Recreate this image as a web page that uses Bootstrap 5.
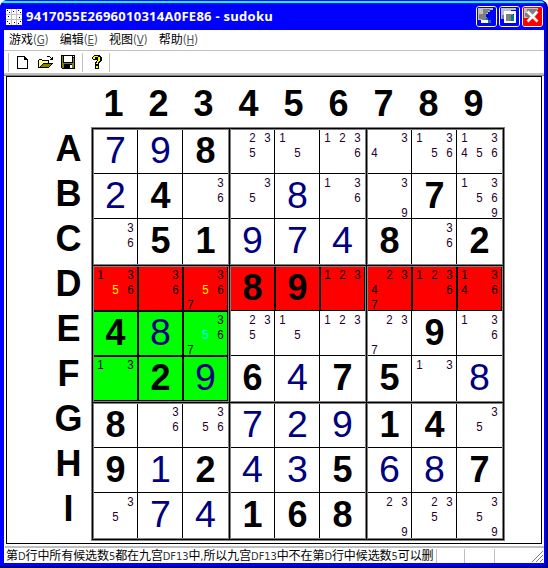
<!DOCTYPE html>
<html lang="zh-CN">
<head>
<meta charset="utf-8">
<title>sudoku</title>
<link href="https://cdn.jsdelivr.net/npm/bootstrap@5.3.0/dist/css/bootstrap.min.css" rel="stylesheet">
<style>
body{width:548px;height:568px;overflow:hidden;background:#fff;font-family:"Liberation Sans","Noto Sans CJK SC",sans-serif;color:#000}
svg{display:block;flex:none}
.win{width:548px;height:568px;background:#00f;border-radius:8px 8px 0 0;border-right:2px solid #000080;border-bottom:2px solid #000080;padding:0 2px 3px 4px}
.titlebar{height:30px;margin:0 -2px 0 -4px;padding:5px 3px 0 6px;background:linear-gradient(#00f 0 1px,#0ff 1px 3px,#00f 3px);border-radius:8px 8px 0 0}
.title-text{font:bold 13px/22px "Open Sans",sans-serif;margin-left:4px;letter-spacing:.27px;white-space:pre}
.cap{width:21px;height:21px;border:1px solid #fff;border-radius:3px;margin:1px 0 0 2px;overflow:hidden}
.client{height:533px}
.menus{height:21px;border-bottom:1px solid silver;padding:0 0 2px 5px;font:12px/17px "Noto Sans CJK SC",sans-serif;gap:11.5px}
.menus span{font-family:"DejaVu Sans",sans-serif;font-stretch:condensed;font-size:11.5px;color:#555;letter-spacing:-.3px}
.menus i{font-style:normal;text-decoration:underline}
.tools{height:22px}
.vbar{width:1px;height:19px;background:silver}
.edge{height:3px;background:linear-gradient(silver 0 2px,gray 2px)}
.edge-low{height:2px;background:silver;margin:2px 0 0 1px}
.sheet{width:536px;height:468px;margin-left:2px;border:1px solid #000;padding:4px 0 0 39px}
.axis{font-weight:700;font-size:36px;line-height:45px;text-align:center}
.axis>div{width:45px;height:45px}
.board{width:414px;height:414px;margin-top:1px;background:#000;border:1px solid gray;padding:2px;display:grid;grid-template:repeat(3,134px)/repeat(3,134px);gap:3px}
.block{display:grid;grid-template:44px 45px 45px/44px 45px 45px;box-shadow:0 0 0 1px gray;background:#fff}
.cell{display:flex;align-items:flex-end;justify-content:flex-end;border:0 solid #000;position:relative}
.c0,.c1{border-right-width:1px}.r0,.r1{border-bottom-width:1px}
.big{flex:none;width:45px;font-size:36px;line-height:47px;height:47px;text-align:center;font-weight:700}
.c0 .big,.c1 .big{margin-right:-1px}.r0 .big,.r1 .big{margin-bottom:-1px}
.big.solved{font-weight:400;font-size:37.5px;color:#000080}
.cands{flex:none;display:grid;grid-template:repeat(3,15px)/repeat(3,15px);font-size:12.5px;line-height:15px;text-align:center;margin-bottom:-2px;color:#28002c}
.c0 .cands,.c1 .cands{margin-right:-1px}.r0 .cands,.r1 .cands{margin-bottom:-3px}
.cands span{transform:scaleX(.92)}
.red{background:#f00}.green{background:#0f0}
.red .cands,.green .cands{color:#000}
.red.c1,.red.c2,.green.c1,.green.c2{background-image:linear-gradient(90deg,#000 1px,transparent 1px)}
.red.c2:after,.green.c2:after{content:"";position:absolute;inset:0 0 0 auto;width:1px;background:#000}
.green.r1,.green.r2{border-top:1px solid #000}
.green.r2{border-bottom:1px solid #000}
.green.r2>*{margin-bottom:-1px}
.green.r2 .cands{margin-bottom:-3px}
.red .hot{color:#ff0}.green .hot{color:#0ff}
.status{height:17px;font:12px/14px "Noto Sans CJK SC",sans-serif;margin-left:1px}
.status .msg{width:431px;height:15px;white-space:nowrap;padding-left:1px;letter-spacing:-.08px}
.status b{font:11px/14px "DejaVu Sans",sans-serif;font-stretch:condensed;color:#333}
.status .pane{border-left:1px solid silver;height:14px;margin-top:1px}
.p1{width:28px}.p2{width:30px}
.i-new{margin-left:8px}.i-open{margin-left:10px}.i-save{margin-left:7px}.i-help{margin-left:9px}.gap7{margin-left:7px}
</style>
<script src="https://cdn.jsdelivr.net/npm/bootstrap@5.3.0/dist/js/bootstrap.bundle.min.js"></script>
</head>
<body>
<div class="win d-flex flex-column">
  <div class="titlebar d-flex align-items-start">
    <svg width="16" height="16" class="mt-1" shape-rendering="crispEdges"><path fill="#fff" d="M0 0h16v16H0z"/><path fill="silver" d="M5 0h1v16H5zM10 0h1v16h-1zM0 5h16v1H0zM0 10h16v1H0z"/><path fill="#000" d="M1 1h1v1H1zM3 3h1v1H3zM7 2h1v1H7zM12 1h1v1h-1zM14 3h1v1h-1zM2 7h1v1H2zM13 8h1v1h-1zM1 12h1v1H1zM3 14h1v1H3zM8 13h1v1H8zM12 14h1v1h-1zM14 12h1v1h-1z"/></svg>
    <div class="title-text text-white flex-grow-1">9417055E2696010314A0FE86 - sudoku</div>
    <div class="cap"><svg width="19" height="19" shape-rendering="crispEdges"><path fill="#00f" d="M0 0h19v19H0z"/><path fill="silver" d="M1 1h15v2h-3v2h-2v2H9v3H5v3H1z"/><path fill="gray" d="M6 2h7v2h-2v2H9v4h1v4H5v-2H2V7h4z"/><path fill="teal" d="M9 11h2v2h3v3h-3v-2H9z"/><path fill="#fff" d="M4 13h7v3H4z"/></svg></div>
    <div class="cap"><svg width="19" height="19" shape-rendering="crispEdges"><path fill="#00f" d="M0 0h19v19H0z"/><path fill="silver" d="M1 1h15v2h-5v4H6v5H1z"/><path fill="gray" d="M5 5h9l-3 9H5v-2H2V8h3z"/><path fill="teal" d="M11 8h3v7h-3z"/><path fill="#fff" d="M4 4h12v12H4zM6 7v7h8V7z" fill-rule="evenodd"/></svg></div>
    <div class="cap"><svg width="19" height="19"><path fill="red" d="M0 0h19v19H0z"/><path fill="silver" d="M1 1h14v2h-4v4H6v4H1z"/><path fill="gray" d="M4 2h10v5l-3 5H7L2 9V6h2z"/><path stroke="#fff" stroke-width="2.6" d="M4.500 4.500l10 10M14.500 4.500l-10 10"/></svg></div>
  </div>
  <div class="client bg-white">
    <div class="menus d-flex">
      <div>游戏<span>(<i>G</i>)</span></div><div>编辑<span>(<i>E</i>)</span></div><div>视图<span>(<i>V</i>)</span></div><div>帮助<span>(<i>H</i>)</span></div>
    </div>
    <div class="tools d-flex align-items-center">
      <div class="vbar ms-1"></div>
      <svg class="i-new" width="11" height="13" shape-rendering="crispEdges"><path fill="#000" d="M0 0h8v1h1v1h1v1h1v10H0zM1 1v11h9V4H7V1z" fill-rule="evenodd"/></svg>
      <svg class="i-open" width="16" height="14" shape-rendering="crispEdges"><path fill="#000" d="M9 1h3v1h1v1h1V2h1v3h-3V4h1V3h-1V2H9zM1 4h3v1h7v3h4v1h-1v1h-1v1h-1v1h-1v1H0V5h1z"/><path fill="#ffff80" d="M1 5h3v1h6v2H5v1H4v1H3v1H2v1H1z"/><path fill="olive" d="M5 9h8v1h-1v1h-1v1H3v-1h1v-1h1z"/></svg>
      <svg class="i-save" width="14" height="14" shape-rendering="crispEdges"><path fill="#000" d="M0 0h14v14H1v-1H0z"/><path fill="olive" d="M1 1h1v7h10V3h1v10H1z"/><path fill="#fff" d="M3 1h8v6H3zM12 1h1v1h-1zM9 10h2v3H9z"/><path fill="#000" d="M3 9h8v1H3zM3 10h6v3H3z"/></svg>
      <div class="vbar gap7"></div>
      <svg class="i-help" width="10" height="14" shape-rendering="crispEdges"><path fill="#000" d="M2 0h6v1h1v1h1v4H9v1H8v1H7v2H3V7h1V6h1V5H1V4H0V2h1V1h1zM3 10h4v4H3z"/><path fill="#ff0" d="M3 1h3v1H3v2H1V2h1V1zM6 2h2v4H7v1H6v2H4V8h1V6h1zM4 11h2v2H4z"/></svg>
      <div class="vbar gap7"></div>
    </div>
    <div class="edge"></div>
    <div class="sheet">
      <div class="axis d-flex" id="cols"></div>
      <div class="d-flex">
        <div class="axis d-flex flex-column" id="rows"></div>
        <div class="board" id="board"></div>
      </div>
    </div>
    <div class="edge-low"></div>
    <div class="status d-flex">
      <div class="msg">第<b>D</b>行中所有候选数<b>5</b>都在九宫<b>DF13</b>中<b>,</b>所以九宫<b>DF13</b>中不在第<b>D</b>行中候选数<b>5</b>可以删</div>
      <div class="pane p1"></div><div class="pane p2"></div><div class="pane flex-grow-1 d-flex justify-content-end align-items-end"><svg width="13" height="13"><path stroke="gray" d="M1 12L12 1M5 12l7-7M9 12l3-3"/></svg></div>
    </div>
  </div>
</div>
<script>
// "=n" given digit, "+n" solved digit, otherwise the list of candidates
const rowData = [
 '+7 +9 =8 235 15 1236 34 1356 13456',
 '+2 =4 36 35 +8 136 39 =7 13569',
 '36 =5 =1 +9 +7 +4 =8 36 =2',
 '1356 36 3567 =8 =9 123 2347 1236 1346',
 '=4 +8 3567 235 15 123 237 =9 136',
 '13 =2 +9 =6 +4 =7 =5 13 +8',
 '=8 36 356 +7 +2 +9 =1 =4 35',
 '=9 +1 =2 +4 +3 =5 +6 +8 =7',
 '35 +7 +4 =1 =6 =8 239 235 359'].map(r => r.split(' '));
const cell = (r, c) => {
  const v = rowData[r][c], hue = r === 3 ? ' red' : (r === 4 || r === 5) && c < 3 ? ' green' : '';
  const body = /[=+]/.test(v[0])
    ? `<div class="big${v[0] === '+' ? ' solved' : ''}">${v[1]}</div>`
    : '<div class="cands">' + [...'123456789'].map(n => `<span${n === '5' ? ' class="hot"' : ''}>${v.includes(n) ? n : ''}</span>`).join('') + '</div>';
  return `<div class="cell r${r % 3} c${c % 3}${hue}">${body}</div>`;
};
let html = '';
for (let b = 0; b < 9; b++) {
  html += '<div class="block">';
  for (let i = 0; i < 9; i++) html += cell((b / 3 | 0) * 3 + (i / 3 | 0), b % 3 * 3 + i % 3);
  html += '</div>';
}
document.getElementById('board').innerHTML = html;
document.getElementById('cols').innerHTML = '<div></div>' + [...'123456789'].map(n => `<div>${n}</div>`).join('');
document.getElementById('rows').innerHTML = [...'ABCDEFGHI'].map(n => `<div>${n}</div>`).join('');
</script>
</body>
</html>
